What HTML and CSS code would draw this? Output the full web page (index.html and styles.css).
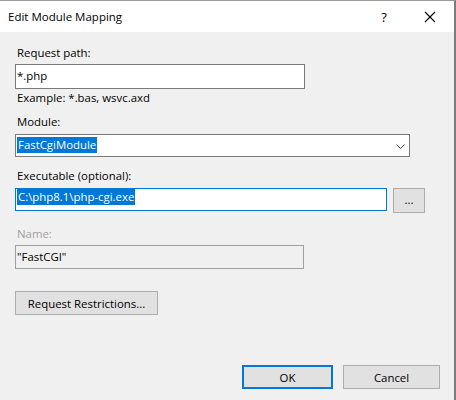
FILE: index.html
```html
<!DOCTYPE html>
<html>
<head>
<meta charset="utf-8">
<link rel="stylesheet" href="styles.css">
</head>
<body>
<div class="window">
  <div class="titlebar">
    <span class="title">Edit Module Mapping</span>
    <span class="help">?</span>
    <span class="close"><svg width="12" height="12" viewBox="0 0 12 12"><path d="M1 1 L11 11 M11 1 L1 11" stroke="#000" stroke-width="1.1" fill="none"/></svg></span>
  </div>
  <div class="content">
    <div class="label l-req">Request path:</div>
    <div class="textbox tb-req">*.php</div>
    <div class="hint">Example: *.bas, wsvc.axd</div>
    <div class="label l-mod">Module:</div>
    <div class="select"><span class="sel">FastCgiModule</span><svg class="chev" width="9" height="5" viewBox="0 0 9 5"><path d="M0.5 0.5 L4.5 4.5 L8.5 0.5" stroke="#444" stroke-width="1" fill="none"/></svg></div>
    <div class="label l-exe">Executable (optional):</div>
    <div class="exe-row">
      <div class="textbox tb-exe"><span class="sel">C:\php8.1\php-cgi.exe</span></div>
      <div class="btn browse">...</div>
    </div>
    <div class="label l-name">Name:</div>
    <div class="textbox tb-name">"FastCGI"</div>
    <div class="btn restrict">Request Restrictions...</div>
    <div class="footer">
      <div class="btn ok">OK</div>
      <div class="btn cancel">Cancel</div>
    </div>
  </div>
</div>
</body>
</html>
```

FILE: styles.css
```css
html, body {
  margin: 0;
  padding: 0;
  background: #f0f0f0;
}
body {
  font-family: "Open Sans", "Noto Sans", sans-serif;
  font-size: 11.4px;
  color: #000;
}
.window {
  width: 456px;
  height: 400px;
  box-sizing: border-box;
  border-top: 1px solid #9a9a9a;
  border-right: 2px solid #7c7c7c;
  background: #f0f0f0;
  display: flex;
  flex-direction: column;
}
.titlebar {
  height: 31px;
  background: #fff;
  display: flex;
  align-items: center;
  padding-left: 8px;
  font-size: 11.5px;
}
.title {
  flex: 1;
}
.help {
  width: 46px;
  text-align: center;
  font-size: 13px;
}
.close {
  width: 46px;
  display: flex;
  justify-content: center;
  margin-right: 1px;
}
.content {
  padding: 13px 0 0 15px;
  display: flex;
  flex-direction: column;
  align-items: flex-start;
}
.label, .hint {
  line-height: 16px;
  height: 16px;
  padding-left: 2px;
}
.l-mod { margin-top: 8px; }
.l-exe { margin-top: 11px; }
.l-name { margin-top: 13px; color: #a0a0a0; }
.hint { margin-top: 1px; }
.textbox {
  box-sizing: border-box;
  background: #fff;
  border: 1px solid #7a7a7a;
  line-height: 16px;
  padding-left: 1px;
}
.tb-req {
  margin-top: 3px;
  width: 290px;
  height: 25px;
  padding-top: 3px;
}
.select {
  margin-top: 4px;
  box-sizing: border-box;
  width: 395px;
  height: 23px;
  background: #fff;
  border: 1px solid #7a7a7a;
  display: flex;
  align-items: flex-start;
  justify-content: space-between;
  padding: 2px 4px 0 1px;
  line-height: 16px;
}
.chev {
  margin-top: 7px;
}
.sel {
  background: #0078d7;
  color: #fff;
  display: inline-block;
  height: 16px;
  line-height: 16px;
  padding: 0 1px;
}
.exe-row {
  margin-top: 4px;
  display: flex;
  align-items: flex-start;
  gap: 6px;
}
.tb-exe {
  width: 372px;
  height: 23px;
  border-color: #0078d7;
  padding-top: 0;
}
.btn {
  box-sizing: border-box;
  background: #e1e1e1;
  border: 1px solid #adadad;
  height: 24px;
  display: flex;
  align-items: center;
  justify-content: center;
}
.browse {
  width: 32px;
  height: 25px;
  padding-bottom: 2px;
}
.tb-name {
  margin-top: 3px;
  width: 289px;
  height: 24px;
  background: #f0f0f0;
  border-color: #a0a0a0;
  padding-top: 3px;
}
.restrict {
  margin-top: 22px;
  width: 143px;
}
.footer {
  margin-top: 50px;
  align-self: stretch;
  display: flex;
  justify-content: flex-end;
  gap: 10px;
  padding-right: 14px;
}
.ok {
  width: 91px;
  border: 2px solid #0078d7;
}
.cancel {
  width: 97px;
}
```
